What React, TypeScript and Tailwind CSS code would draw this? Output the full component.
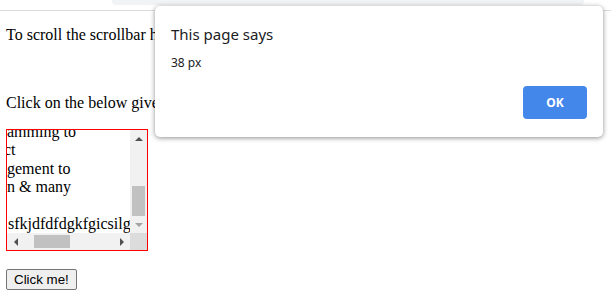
import React from 'react';

const serif = { fontFamily: '"Liberation Serif", "Times New Roman", serif' };

const lines = [
  { text: 'amming to', shift: 0 },
  { text: 'ct', shift: -3 },
  { text: 'gement to', shift: 0 },
  { text: 'n & many', shift: 0 },
  { text: '\u00a0', shift: 0 },
  { text: 'sfkjdfdfdgkfgicsilgfdkfj', shift: 1 },
];

const Arrow = ({ dir, color }: { dir: 'up' | 'down' | 'left' | 'right'; color: string }) => {
  const pts = {
    up: '0,4 4,0 8,4',
    down: '0,0 8,0 4,4',
    left: '4,0 4,8 0,4',
    right: '0,0 0,8 4,4',
  }[dir];
  const vertical = dir === 'up' || dir === 'down';
  return (
    <svg width={vertical ? 8 : 4} height={vertical ? 4 : 8} viewBox={vertical ? '0 0 8 4' : '0 0 4 8'}>
      <polygon points={pts} fill={color} />
    </svg>
  );
};

const ScrollBox = () => (
  <div className="mt-[17px] w-[142px] h-[122px] border border-[#ff0000] flex flex-col">
    <div className="flex flex-1 min-h-0">
      <div className="flex-1 overflow-hidden text-[16px] leading-[18.4px] text-black" style={serif}>
        <div className="-mt-[7px]">
          {lines.map((l, i) => (
            <div key={i} className="whitespace-nowrap" style={{ marginLeft: l.shift }}>
              {l.text}
            </div>
          ))}
        </div>
      </div>
      <div className="w-[17px] bg-[#f1f1f1] flex flex-col">
        <div className="h-[17px] flex items-center justify-center">
          <Arrow dir="up" color="#505050" />
        </div>
        <div className="flex-1 px-[2px]">
          <div className="mt-[39px] h-[30px] bg-[#c1c1c1]" />
        </div>
        <div className="h-[17px] flex items-center justify-center">
          <Arrow dir="down" color="#a3a3a3" />
        </div>
      </div>
    </div>
    <div className="h-[17px] flex">
      <div className="flex-1 bg-[#f1f1f1] flex">
        <div className="w-[17px] flex items-center justify-center">
          <Arrow dir="left" color="#505050" />
        </div>
        <div className="flex-1 py-[2px]">
          <div className="ml-[10px] w-[36px] h-full bg-[#c1c1c1]" />
        </div>
        <div className="w-[17px] flex items-center justify-center">
          <Arrow dir="right" color="#505050" />
        </div>
      </div>
      <div className="w-[17px] bg-[#dcdcdc]" />
    </div>
  </div>
);

const AlertDialog = () => (
  <div
    className="absolute left-[155px] top-[6px] w-[448px] h-[131px] bg-white rounded-[5px] shadow-[0_1px_5px_rgba(0,0,0,0.45)] pl-[16px] pr-[16px] pt-[18px]"
    style={{ fontFamily: '"Segoe UI", "Noto Sans", "Open Sans", sans-serif' }}
  >
    <div className="text-[15px] leading-[20px] text-[#202124]">This page says</div>
    <div className="mt-[11px] text-[12px] leading-[16px] text-[#202124]">38 px</div>
    <div className="flex justify-end mt-[15px]">
      <button className="w-[64px] h-[33px] rounded-[4px] bg-[#4487ea] text-white text-[12px] font-bold">
        OK
      </button>
    </div>
  </div>
);

export default function App() {
  return (
    <div className="relative w-[611px] h-[293px] bg-white overflow-hidden">
      <div className="relative h-[11px] border-b border-[#dadce0]">
        <div className="absolute left-[112px] top-0 w-[472px] h-[5px] bg-[#f1f3f4] rounded-br-[4px] rounded-bl-[4px]" />
      </div>
      <div className="pl-[6px] text-[16px] leading-[18px] text-black" style={serif}>
        <p className="mt-[15px] whitespace-nowrap">To scroll the scrollbar horizontally and vertically</p>
        <p className="mt-[50px] whitespace-nowrap">Click on the below given button</p>
        <ScrollBox />
        <button
          className="mt-[18px] h-[21px] px-[7px] bg-[#efefef] border border-[#767676] rounded-[2px] text-[13.33px] text-black"
          style={{ fontFamily: '"Liberation Sans", Arial, sans-serif' }}
        >
          Click me!
        </button>
      </div>
      <AlertDialog />
    </div>
  );
}
